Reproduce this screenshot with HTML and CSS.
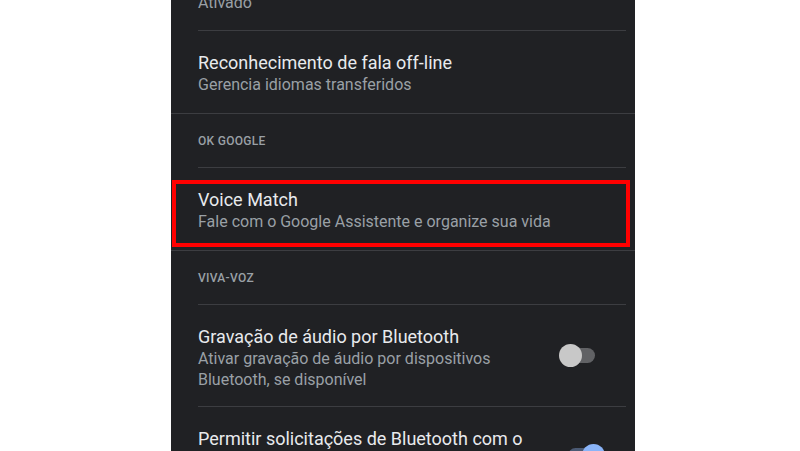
FILE: index.html
```html
<!DOCTYPE html>
<html lang="pt-BR">
<head>
<meta charset="utf-8">
<title>Configurações de voz</title>
<link rel="stylesheet" href="styles.css">
</head>
<body>
<div class="screen">
  <div class="item item-prev">
    <div class="sub">Ativado</div>
  </div>
  <div class="divider inset"></div>
  <div class="item">
    <div class="text">
      <div class="title">Reconhecimento de fala off-line</div>
      <div class="sub">Gerencia idiomas transferidos</div>
    </div>
  </div>
  <div class="divider full"></div>
  <div class="header">OK GOOGLE</div>
  <div class="divider inset"></div>
  <div class="item highlighted">
    <div class="text">
      <div class="title">Voice Match</div>
      <div class="sub">Fale com o Google Assistente e organize sua vida</div>
    </div>
  </div>
  <div class="divider full"></div>
  <div class="header">VIVA-VOZ</div>
  <div class="divider inset"></div>
  <div class="item item-toggle">
    <div class="text">
      <div class="title">Gravação de áudio por Bluetooth</div>
      <div class="sub">Ativar gravação de áudio por dispositivos<br>Bluetooth, se disponível</div>
    </div>
    <div class="toggle off"><span class="track"></span><span class="knob"></span></div>
  </div>
  <div class="divider inset"></div>
  <div class="item item-toggle item-last">
    <div class="text">
      <div class="title">Permitir solicitações de Bluetooth com o<br>dispositivo bloqueado</div>
    </div>
    <div class="toggle on"><span class="track"></span><span class="knob"></span></div>
  </div>
</div>
</body>
</html>
```

FILE: styles.css
```css
* { box-sizing: border-box; }
html, body {
  margin: 0;
  padding: 0;
  background: #ffffff;
  height: 451px;
  overflow: hidden;
}
body {
  font-family: Roboto, "Noto Sans", Arial, sans-serif;
}
.screen {
  margin-left: 171px;
  width: 464px;
  height: 451px;
  background: #202124;
  overflow: hidden;
}
.item {
  position: relative;
  padding: 20px 9px 18px 27px;
  display: flex;
  align-items: center;
}
.item-prev {
  margin-top: -8px;
  padding-top: 0;
  padding-bottom: 17px;
}
.text { flex: 1; }
.title {
  color: #e8eaed;
  font-size: 18px;
  line-height: 23px;
}
.sub {
  color: #9aa0a6;
  font-size: 16px;
  line-height: 21px;
}
.item-toggle { padding-bottom: 16px; }
.divider {
  height: 1px;
  background: #3c3d41;
}
.divider.inset { margin: 0 9px 0 27px; }
.divider.full { margin: 0; }
.header {
  color: #9aa0a6;
  font-size: 12px;
  font-weight: 500;
  letter-spacing: 0.3px;
  line-height: 51px;
  height: 53px;
  padding-top: 2px;
  padding-left: 27px;
}
.highlighted::after {
  content: "";
  position: absolute;
  left: 1px;
  right: 5px;
  top: 12px;
  bottom: 3px;
  border: 4px solid #ff0000;
}
.toggle {
  position: relative;
  width: 37px;
  height: 23px;
  margin-right: 30px;
  flex-shrink: 0;
  margin-bottom: 5px;
}
.toggle .track {
  position: absolute;
  left: 3px;
  top: 4px;
  width: 33px;
  height: 15px;
  border-radius: 8px;
}
.toggle .knob {
  position: absolute;
  top: 0;
  width: 23px;
  height: 23px;
  border-radius: 50%;
}
.toggle.off .track { background: #616265; }
.toggle.off .knob { left: 0; background: #c8c8c8; }
.toggle.on { margin-top: 15px; margin-right: 21px; }
.toggle.on .track { left: 0; background: #4b5a74; }
.toggle.on .knob { left: 14px; background: #8ab4f8; }
```
